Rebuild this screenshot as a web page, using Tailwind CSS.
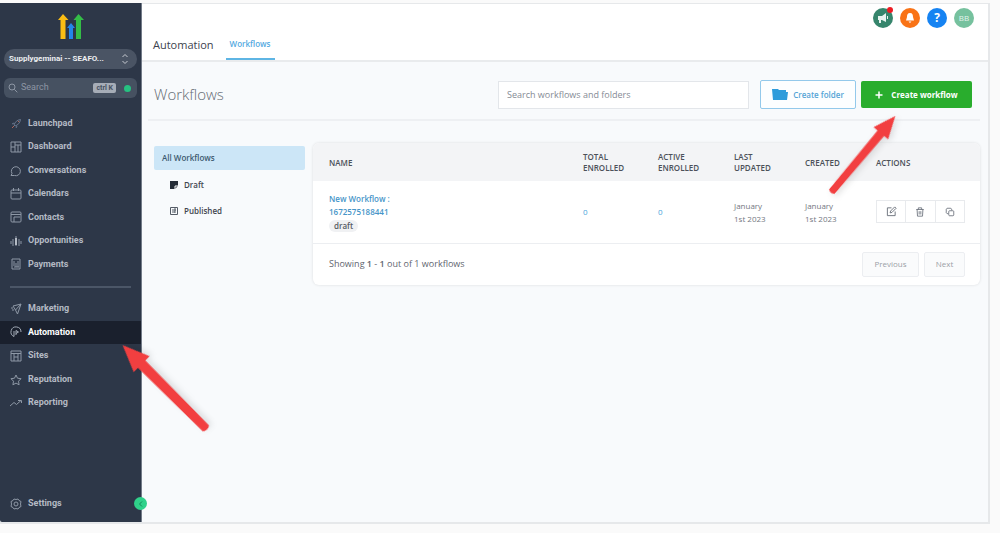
<!DOCTYPE html>
<html lang="en">
<head>
<meta charset="utf-8">
<title>Automation - Workflows</title>
<meta name="viewport" content="width=device-width, initial-scale=1">
<script src="https://cdn.jsdelivr.net/npm/@tailwindcss/browser@4"></script>
</head>
<body class="min-h-screen bg-[#fafafa] font-['Open_Sans',sans-serif] text-[#3c4149]">
<svg class="hidden">
  <symbol id="arrow" viewBox="0 0 120 24"><path d="M4 8 Q1 12 4 16 L92 17 L92 23 L118 12 L92 1 L92 7 Z" fill="#f23f40"/></symbol>
</svg>
<div class="flex min-h-screen border-t-3 border-r-10 border-b-9 border-[#fafafa]">
<div class="flex flex-1 border-t border-r-2 border-b-2 border-[#e6e8ea] bg-[#f8fafc]">

<aside class="relative -mt-px flex w-[142px] shrink-0 flex-col rounded-bl-xs border-r border-[#737b88] bg-[#2d3748] font-[Roboto,sans-serif] text-[9px] font-bold text-[#b4bac4]">
  <a href="#" aria-label="Home" class="mx-auto mt-[11px] block h-[26px] w-[26px]">
    <svg viewBox="0 0 26 26" class="h-full w-full"><path d="M5 0 10.500 6H7.500V25H2.500V6H0Z" fill="#fabd14"/><path d="M13 9 17 14H15V25H11V14H9Z" fill="#2487ea"/><path d="M20.500 0 26 6H23V25H18V6H15.500Z" fill="#34bd47"/></svg>
  </a>
  <button class="mx-1 mt-[9px] flex h-5 items-center justify-between rounded-full bg-[#4a5464] pr-2 pl-[5px] text-[8px] text-[#eceef1]">
    <span>Supplygeminai -- SEAFO...</span>
    <svg viewBox="0 0 8 12" class="h-3 w-2" fill="none" stroke="#c6cad1"><path d="M1.500 4 4 1.500 6.500 4M1.500 8 4 10.500 6.500 8"/></svg>
  </button>
  <div class="mx-1 mt-[9px] flex h-5 items-center rounded-md bg-[#465161] px-1">
    <svg viewBox="0 0 10 10" class="h-[10px] w-[10px] shrink-0" fill="none" stroke="#8d96a4"><circle cx="4" cy="4" r="3"/><path d="m6.300 6.300 3 3"/></svg>
    <input aria-label="Search" placeholder="Search" class="ml-[3px] w-full min-w-0 bg-transparent font-normal outline-none placeholder:text-[#8d96a4]">
    <kbd class="shrink-0 rounded-xs bg-[#a6adb7] px-[3px] font-[Roboto,sans-serif] text-[7px] leading-[10px] text-[#465161]">ctrl K</kbd>
    <span class="mr-[2px] ml-2 h-[7px] w-[7px] shrink-0 rounded-full bg-[#26c281]"></span>
  </div>

  <nav class="mt-[14px] grid h-[164px] auto-rows-fr">
    <a href="#" class="flex items-center gap-[6px] pl-[10px]"><svg viewBox="0 0 12 12" class="h-3 w-3" fill="none" stroke="#69778e"><path d="M4 7C5 4 7 2 10.500 1.500 10 5 8 7 5 8ZM4 5 2 6M7 8 6 10"/><path d="m2 10 2-2M8 3l1 1" stroke="#b06458"/></svg>Launchpad</a>
    <a href="#" class="flex items-center gap-[6px] pl-[10px]"><svg viewBox="0 0 12 12" class="h-3 w-3" fill="none" stroke="#8e98a6"><path d="M1 1h10v10H1ZM5 1v10M5 6H1M5 4h6M8 4v7"/></svg>Dashboard</a>
    <a href="#" class="flex items-center gap-[6px] pl-[10px]"><svg viewBox="0 0 12 12" class="h-3 w-3" fill="none" stroke="#8e98a6"><path d="M1 10.500 2 8.500A4.500 4.500 0 1 1 4.500 10.500Z"/></svg>Conversations</a>
    <a href="#" class="flex items-center gap-[6px] pl-[10px]"><svg viewBox="0 0 12 12" class="h-3 w-3" fill="none" stroke="#8e98a6"><rect x="1" y="2" width="10" height="9" rx="1"/><path d="M1 5h10M3.500 0v3M8.500 0v3"/></svg>Calendars</a>
    <a href="#" class="flex items-center gap-[6px] pl-[10px]"><svg viewBox="0 0 12 12" class="h-3 w-3" fill="none" stroke="#8e98a6"><rect x="1" y="1" width="10" height="10" rx="1"/><path d="M1 3.500h10M4 6v5M4 6h6"/></svg>Contacts</a>
    <a href="#" class="flex items-center gap-[6px] pl-[10px]"><svg viewBox="0 0 12 12" class="h-3 w-3" fill="none" stroke="#8e98a6"><path d="M6 1v10M3 4v7M9 4v7M1 6v3M11 6v3"/><path d="M5 3h2v7H5Z" fill="#b4bac4" stroke="none"/></svg>Opportunities</a>
    <a href="#" class="flex items-center gap-[6px] pl-[10px]"><svg viewBox="0 0 12 12" class="h-3 w-3" fill="none" stroke="#8e98a6"><path d="M2 1h8v10H2ZM4 3v5M6 5v4M8 3v6M4 9h5"/></svg>Payments</a>
  </nav>
  <hr class="mx-[10px] mt-[10px] border-t-2 border-[#4b5667]">
  <nav class="mt-[9px] grid h-[118px] auto-rows-fr">
    <a href="#" class="flex items-center gap-[6px] pl-[10px]"><svg viewBox="0 0 12 12" class="h-3 w-3" fill="none" stroke="#8e98a6"><path d="M11 1 7.500 11 5.500 7ZM11 1 3 3 5.500 7M1 5h2M2 7h2"/></svg>Marketing</a>
    <a href="#" aria-current="page" class="relative flex items-center gap-[6px] bg-[#1a202d] pl-[10px] text-white"><svg viewBox="0 0 12 12" class="h-3 w-3" fill="none" stroke="#a3abb7"><path d="M4 10.500A5 5 0 1 1 11 6M4 10.500V5M6 9V4.500L8.500 6 6 7.500"/></svg>Automation
      <svg viewBox="0 0 120 24" class="pointer-events-none absolute top-[54px] left-[103px] z-10 h-[25px] w-[124px] rotate-[225deg] drop-shadow-md"><use href="#arrow"/></svg></a>
    <a href="#" class="flex items-center gap-[6px] pl-[10px]"><svg viewBox="0 0 12 12" class="h-3 w-3" fill="none" stroke="#8e98a6"><path d="M1 1h10v10H1ZM1 3.500h10M4 3.500v7.500M8 3.500v7.500M4 7h4"/></svg>Sites</a>
    <a href="#" class="flex items-center gap-[6px] pl-[10px]"><svg viewBox="0 0 12 12" class="h-3 w-3" fill="none" stroke="#8e98a6"><path d="m6 1 1.500 3.200 3.500.5-2.500 2.500.6 3.600L6 9.100l-3.100 1.700.6-3.600L1 4.700l3.500-.5Z"/></svg>Reputation</a>
    <a href="#" class="flex items-center gap-[6px] pl-[10px]"><svg viewBox="0 0 12 12" class="h-3 w-3" fill="none" stroke="#8e98a6"><path d="M0 9 4 5.500 6.500 7.500 11 3.500M8 3.500h3.500V6"/></svg>Reporting</a>
  </nav>
  <a href="#" class="mt-auto mb-[6px] flex h-6 items-center gap-[6px] pl-[10px]"><svg viewBox="0 0 12 12" class="h-3 w-3" fill="none" stroke="#8e98a6"><path d="m4 1 2 .5L8 1l1 1.500 2 1-.5 2.500.5 2.500-2 1L8 11l-2-.5L4 11 3 9.500l-2-1L1.500 6 1 3.500l2-1Z"/><circle cx="6" cy="6" r="2"/></svg>Settings</a>
  <button aria-label="Collapse menu" class="absolute -right-[6px] bottom-3 flex h-[13px] w-[13px] items-center justify-center rounded-full bg-[#2fd18a]"><svg viewBox="0 0 8 8" class="h-2 w-2" fill="none" stroke="#148857"><path d="M5 1.500 2.500 4 5 6.500"/></svg></button>
</aside>

<main class="min-w-0 flex-1">
  <header class="flex h-[58px] justify-between border-b-2 border-[#e9ebed] bg-white pr-[14px] pl-[11px]">
    <div class="flex items-end">
      <h2 class="mb-[7px] text-[11px] leading-4 font-medium text-[#3c424d]">Automation</h2>
      <a href="#" class="ml-3 border-b-2 border-[#5eb5e4] px-1 pb-[6px] text-[8px] leading-4 font-semibold text-[#53aadf]">Workflows</a>
    </div>
    <div class="mt-1 flex gap-[7px]">
      <button aria-label="Announcements" class="relative flex h-5 w-5 items-center justify-center rounded-full bg-[#36856c]"><svg viewBox="0 0 12 12" class="h-3 w-3" fill="#e8f3ef"><path d="M1 4h4l4-3v9L5 8H4v3H2V8H1ZM10 4h1v3h-1Z"/></svg><span class="absolute -top-px right-0 h-[6px] w-[6px] rounded-full bg-[#ed1c24]"></span></button>
      <button aria-label="Notifications" class="flex h-5 w-5 items-center justify-center rounded-full bg-[#f97316]"><svg viewBox="0 0 12 12" class="h-3 w-3" fill="#fff"><path d="M6 1C3.500 1 3 3 3 5L2 8.500h8L9 5C9 3 8.500 1 6 1ZM4.500 9.500h3L6 11Z"/></svg></button>
      <button aria-label="Help" class="h-5 w-5 rounded-full bg-[#1683f2] text-[12px] leading-5 font-bold text-white">?</button>
      <button aria-label="Account" class="h-5 w-5 rounded-full bg-[#76c19e] text-[8px] leading-5 text-[#e3f4ec]">BB</button>
    </div>
  </header>

  <section class="mr-2 ml-[6px] flex h-[59px] items-center border-b-2 border-[#eef0f3] pt-2 pr-[8px] pl-[6px]">
    <h1 class="text-[15px] font-light text-[#646a73]">Workflows</h1>
    <input aria-label="Search workflows and folders" placeholder="Search workflows and folders" class="mr-[11px] ml-auto h-7 w-[251px] border border-[#e3e6ea] bg-white px-2 text-[9px] outline-none placeholder:text-[#858b95]">
    <button class="mr-[5px] flex h-[29px] w-24 items-center justify-center gap-[5px] rounded-xs border border-[#93c9eb] bg-[#fcfeff] text-[8px] font-semibold text-[#55a4d6]"><svg viewBox="0 0 16 13" class="h-[13px] w-4" fill="#2f9cdb"><path d="M0 1h6l1 1h7v2H16L15 12H1Z"/></svg>Create folder</button>
    <div class="relative">
      <button class="flex h-[27px] w-[111px] items-center justify-center gap-2 rounded-xs bg-[#29ad2d] text-[8px] font-bold text-white"><svg viewBox="0 0 8 8" class="h-2 w-2" stroke="#fff" stroke-width="1.500"><path d="M4 .5v7M.5 4h7"/></svg>Create workflow</button>
      <svg viewBox="0 0 120 24" class="pointer-events-none absolute top-[63px] -left-[50px] z-10 h-[21px] w-[104px] -rotate-50 drop-shadow-md"><use href="#arrow"/></svg>
    </div>
  </section>

  <section class="flex items-start gap-2 pt-[22px] pr-2 pl-3">
    <nav class="mt-[3px] w-[151px] shrink-0 text-[8px] font-semibold text-[#3f454e]">
      <a href="#" class="flex h-6 items-center rounded-xs bg-[#cce6f7] pl-2 text-[#3d5a70]">All Workflows</a>
      <a href="#" class="mt-[2px] flex h-[26px] items-center gap-[6px] pl-4"><svg viewBox="0 0 8 8" class="h-2 w-2"><path d="M0 0h8v5L5 8H0Z" fill="#252c37"/><path d="M5 8V5h3" fill="none" stroke="#fff"/></svg>Draft</a>
      <a href="#" class="flex h-[26px] items-center gap-[6px] pl-4"><svg viewBox="0 0 8 8" class="h-2 w-2" fill="none" stroke="#555c67"><path d="M.5.500h7v7h-7ZM2 3h4M2 5h3M5 1v5"/></svg>Published</a>
    </nav>
    <div class="min-w-0 flex-1 overflow-hidden rounded-md bg-white shadow-[0_0_3px_rgb(0_0_0/.12)]">
      <table class="w-full table-fixed text-left text-[8px]">
        <colgroup><col><col class="w-[75px]"><col class="w-[76px]"><col class="w-[71px]"><col class="w-[71px]"><col class="w-[104px]"></colgroup>
        <thead class="bg-[#f3f4f6] text-[8px] leading-[11px] text-[#4c5159]">
          <tr class="h-[38px]">
            <th class="pl-4 font-semibold">NAME</th><th class="font-semibold">TOTAL<br>ENROLLED</th><th class="font-semibold">ACTIVE<br>ENROLLED</th><th class="font-semibold">LAST<br>UPDATED</th><th class="font-semibold">CREATED</th><th class="font-semibold">ACTIONS</th>
          </tr>
        </thead>
        <tbody class="leading-[13px] text-[#737881]">
          <tr class="h-[62px] border-b border-[#eceef1]">
            <td class="pl-4"><a href="#" class="block font-semibold text-[#4695c8]">New Workflow :<br>1672575188441</a><span class="mt-[2px] inline-block rounded-full bg-[#f0f1f3] px-[5px] leading-3 font-semibold text-[#555b64]">draft</span></td>
            <td><a href="#" class="text-[#4ba5db]">0</a></td><td><a href="#" class="text-[#4ba5db]">0</a></td>
            <td>January<br>1st 2023</td><td>January<br>1st 2023</td>
            <td><div class="flex h-[23px] w-[89px] divide-x divide-[#e8eaed] border border-[#e8eaed]">
              <button aria-label="Edit" class="flex flex-1 items-center justify-center"><svg viewBox="0 0 12 12" class="h-[11px] w-[11px]" fill="none" stroke="#686e78"><path d="M6 2H1.500v8.500H10V6M4.500 7.500 5 5.500 9.500 1 11 2.500 6.500 7Z"/></svg></button>
              <button aria-label="Delete" class="flex flex-1 items-center justify-center"><svg viewBox="0 0 12 12" class="h-[10px] w-[10px]" fill="none" stroke="#686e78"><path d="M1.500 3h9M4 3V1h4v2M2.500 3 3 11h6l.500-8M5 5v4M7 5v4"/></svg></button>
              <button aria-label="Copy" class="flex flex-1 items-center justify-center"><svg viewBox="0 0 12 12" class="h-[10px] w-[10px]" fill="none" stroke="#686e78"><rect x="4.500" y="4.500" width="6" height="6" rx="1"/><path d="M4 8H2.500l-1-1V2.500l1-1H7l1 1V4"/></svg></button>
            </div></td>
          </tr>
        </tbody>
      </table>
      <div class="flex h-[41px] items-center gap-[5px] pr-[15px] pl-4 text-[8px] text-[#5f656f]">
        <p class="mr-auto text-[9px]">Showing <b class="font-semibold">1</b> - <b class="font-semibold">1</b> out of 1 workflows</p>
        <button class="h-[25px] w-[57px] rounded-xs border border-[#eceef1] bg-[#fafbfc] text-[#9a9fa7]">Previous</button>
        <button class="h-[25px] w-[41px] rounded-xs border border-[#eceef1] bg-[#fafbfc] text-[#9a9fa7]">Next</button>
      </div>
    </div>
  </section>
</main>
</div>
</div>
</body>
</html>
